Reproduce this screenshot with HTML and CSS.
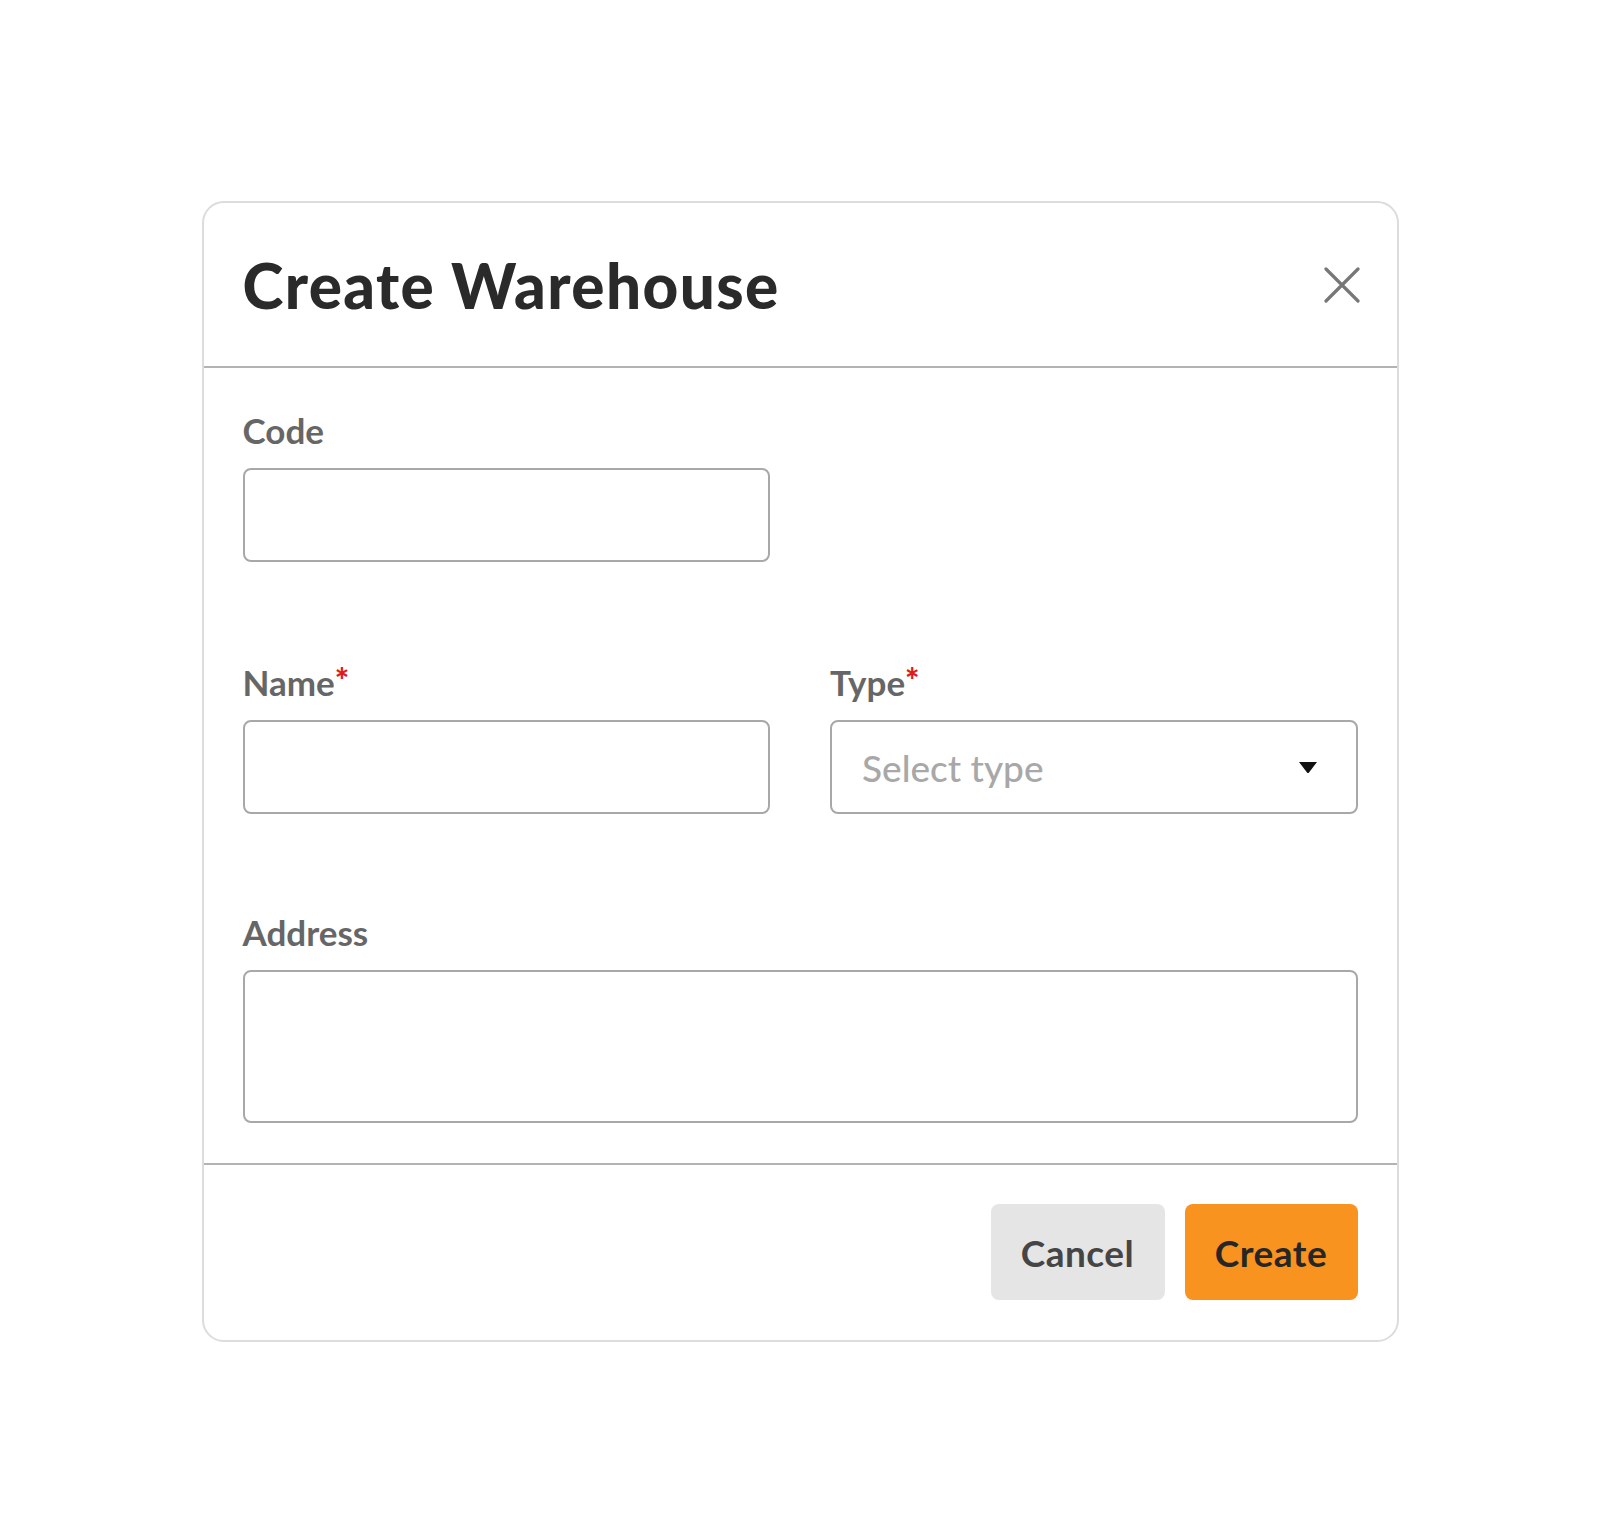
FILE: index.html
```html
<!DOCTYPE html>
<html lang="en">
<head>
<meta charset="utf-8">
<title>Create Warehouse</title>
<link rel="stylesheet" href="styles.css">
</head>
<body>
<div class="modal">
  <div class="modal-header">
    <h1 class="modal-title">Create Warehouse</h1>
    <button class="close-btn" aria-label="Close">
      <svg width="36" height="36" viewBox="0 0 36 36"><path d="M2 2 L34 34 M34 2 L2 34" stroke="#777" stroke-width="3.2" stroke-linecap="round" fill="none"/></svg>
    </button>
  </div>
  <div class="modal-body">
    <div class="row">
      <div class="field">
        <label class="label">Code</label>
        <div class="input"></div>
      </div>
      <div class="field"></div>
    </div>
    <div class="row">
      <div class="field">
        <label class="label">Name<span class="req">*</span></label>
        <div class="input"></div>
      </div>
      <div class="field">
        <label class="label">Type<span class="req">*</span></label>
        <div class="input select">
          <span class="placeholder">Select type</span>
          <svg width="20" height="13" viewBox="0 0 20 13"><path d="M1 1 H19 L11 11.5 Q10 12.6 9 11.5 Z" fill="#111"/></svg>
        </div>
      </div>
    </div>
    <div class="row single">
      <div class="field">
        <label class="label">Address</label>
        <div class="input textarea"></div>
      </div>
    </div>
  </div>
  <div class="modal-footer">
    <button class="btn btn-cancel">Cancel</button>
    <button class="btn btn-create">Create</button>
  </div>
</div>
</body>
</html>
```
FILE: styles.css
```css
html, body {
  margin: 0;
  padding: 0;
  background: #ffffff;
  font-family: "Lato", "Noto Sans", sans-serif;
}

.modal {
  width: 1197px;
  box-sizing: border-box;
  margin: 201px auto 0;
  border: 2px solid #dcdcdc;
  border-radius: 22px;
  background: #fff;
}

.modal-header {
  height: 165px;
  box-sizing: border-box;
  padding: 0 37px 0 39px;
  display: flex;
  align-items: center;
  justify-content: space-between;
  border-bottom: 2px solid #b3b3b3;
}

.modal-title {
  margin: 0;
  font-size: 62px;
  font-weight: 900;
  color: #2a2a2a;
  letter-spacing: 1.4px;
}

.close-btn {
  border: none;
  background: none;
  padding: 0;
  width: 36px;
  height: 36px;
  display: flex;
  align-items: center;
  justify-content: center;
  cursor: pointer;
}

.modal-body {
  padding: 40px 39px 40px;
  display: flex;
  flex-direction: column;
  gap: 96px;
  border-bottom: 2px solid #b3b3b3;
}

.row {
  display: grid;
  grid-template-columns: 1fr 1fr;
  column-gap: 60px;
}

.row.single {
  grid-template-columns: 1fr;
}

.field {
  display: flex;
  flex-direction: column;
}

.label {
  font-size: 35px;
  line-height: 44px;
  font-weight: 700;
  color: #666;
  margin-bottom: 16px;
}

.req {
  color: #e01b1b;
  font-size: 34px;
  font-weight: 900;
  vertical-align: 3px;
}

.input {
  height: 94px;
  box-sizing: border-box;
  border: 2px solid #a8a8a8;
  border-radius: 8px;
  background: #fff;
}

.select {
  display: flex;
  align-items: center;
  justify-content: space-between;
  padding: 0 38px 0 30px;
}

.placeholder {
  font-size: 37px;
  color: #a8a8a8;
  font-weight: 500;
}

.textarea {
  height: 153px;
}

.modal-footer {
  display: flex;
  justify-content: flex-end;
  gap: 20px;
  padding: 39px 39px 40px;
}

.btn {
  height: 96px;
  border: none;
  border-radius: 8px;
  font-family: "Lato", "Noto Sans", sans-serif;
  font-size: 37px;
  font-weight: 700;
  letter-spacing: 0.5px;
  cursor: pointer;
}

.btn-cancel {
  width: 174px;
  background: #e5e5e5;
  color: #454545;
}

.btn-create {
  width: 173px;
  background: #f7931e;
  color: #262626;
}
```
